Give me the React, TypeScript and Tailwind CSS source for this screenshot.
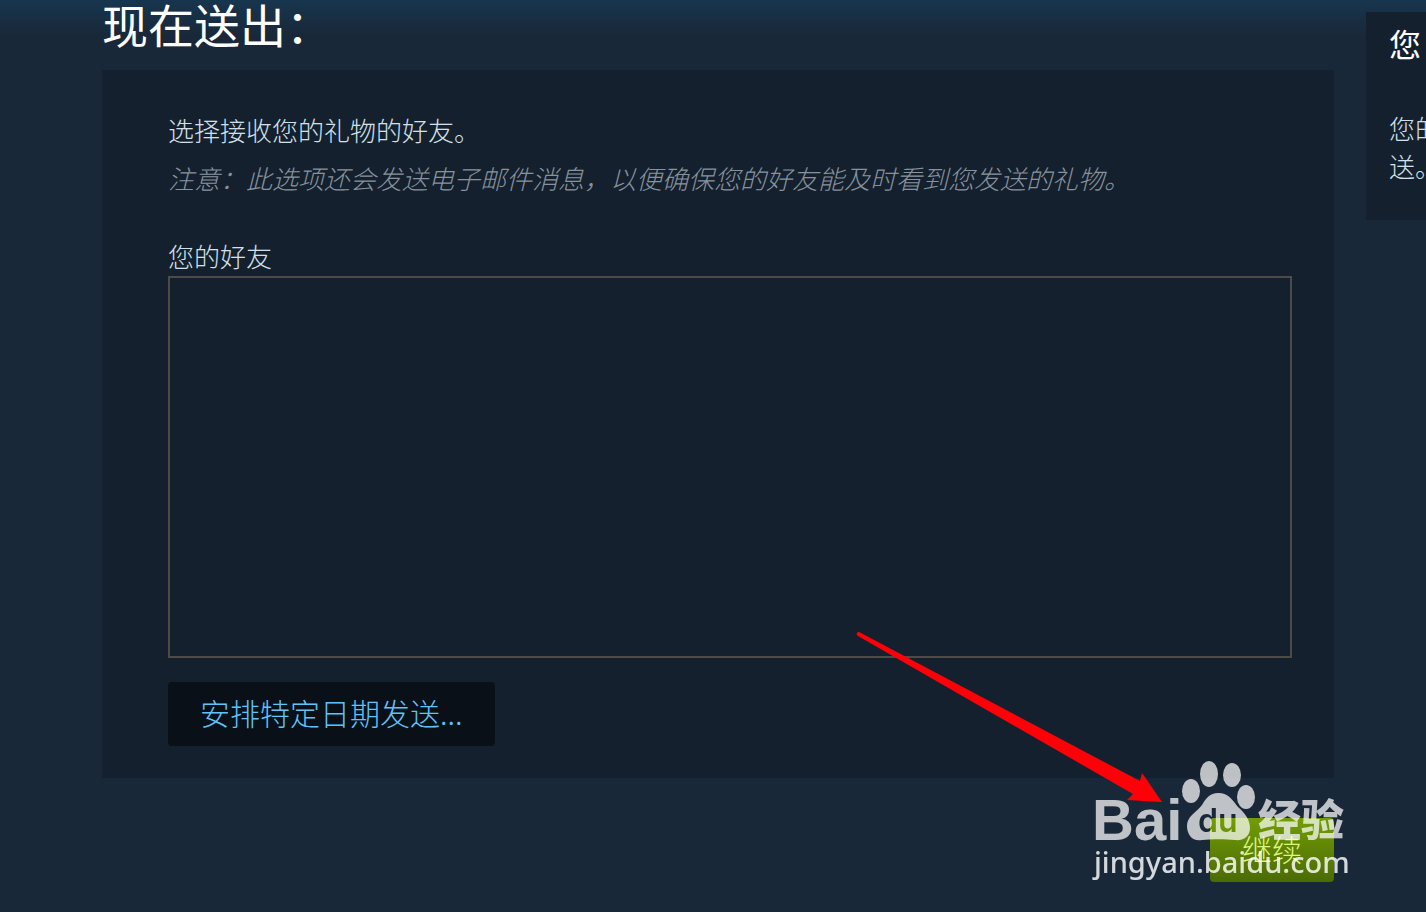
import { FC, ReactNode } from 'react';

interface PanelProps {
  children: ReactNode;
}

const GiftPanel: FC<PanelProps> = ({ children }) => {
  return (
    <section className="bg-[#14202d] pt-[39px] pb-8 pl-[66px] pr-[42px]">
      {children}
    </section>
  );
};

const Sidebar = () => {
  return (
    <aside className="mt-3 h-52 w-[60px] shrink-0 overflow-hidden whitespace-nowrap bg-[#14202d] pl-[23px] pt-[11px]">
      <h2 className="text-[32px] leading-10 text-white">您</h2>
      <p className="mt-[46px] text-[26px] font-light leading-[38px] text-[#d3e0ea]">
        您的
        <br />
        送。
      </p>
    </aside>
  );
};

const Arrow = () => {
  return (
    <svg
      className="pointer-events-none absolute right-[170px] bottom-[76px] h-[176px] w-[308px]"
      viewBox="0 0 308 176"
      aria-hidden="true"
    >
      <path
        d="M1 3Q2 1 5 3L284 151L286 143L306 172L271 170L277 164L2 6Q0 5 1 3Z"
        fill="#ff0008"
      />
    </svg>
  );
};

const Watermark = () => {
  return (
    <svg
      className="pointer-events-none absolute -right-5 -bottom-1 h-[130px] w-[264px]"
      viewBox="0 0 264 130"
      aria-hidden="true"
    >
      <mask id="paw-cut">
        <rect width="264" height="130" fill="#fff" />
        <text
          x="108"
          y="76"
          fontSize="32"
          fontWeight="600"
          className="font-[Inter,sans-serif]"
          fill="#000"
        >
          du
        </text>
      </mask>
      <g fill="#fff" opacity="0.72">
        <text
          x="2"
          y="84"
          fontSize="58"
          fontWeight="700"
          className="font-['Liberation_Sans',sans-serif]"
        >
          Bai
        </text>
        <ellipse cx="101" cy="35" rx="9" ry="12" />
        <ellipse cx="119" cy="18" rx="9" ry="13" />
        <ellipse cx="142" cy="19" rx="9" ry="12" />
        <ellipse cx="156" cy="41" rx="9" ry="12" />
        <path
          d="M128 37C139 37 143 45 148 51C155 57 160 64 160 72C160 80 154 85 145 84C136 83 121 83 112 84C103 86 97 79 97 70C97 60 106 57 112 49C116 42 120 37 128 37Z"
          mask="url(#paw-cut)"
        />
        <text
          x="168"
          y="80"
          fontSize="43"
          fontWeight="900"
          className="font-['Noto_Sans_CJK_SC',sans-serif]"
        >
          经验
        </text>
      </g>
      <text
        x="4"
        y="117"
        fontSize="29"
        fontWeight="500"
        fill="#fff"
        opacity="0.82"
        className="font-['Noto_Sans',sans-serif]"
      >
        jingyan.baidu.com
      </text>
    </svg>
  );
};

const App = () => {
  return (
    <div className="flex min-h-screen items-start gap-8 overflow-hidden bg-[#192838] bg-[linear-gradient(to_bottom,#17354f,#192838_36px)] pl-[102px] font-['Noto_Sans_CJK_SC',sans-serif]">
      <main className="min-w-0 flex-1">
        <h1 className="mb-6 text-[46px] leading-[46px] text-white">
          现在送出：
        </h1>

        <GiftPanel>
          <p className="text-[26px] font-light leading-[42px] text-[#d3e0ea]">
            选择接收您的礼物的好友。
          </p>
          <p className="mt-1.5 text-[26px] font-light italic leading-[42px] text-[#87929d]">
            注意：此选项还会发送电子邮件消息，以便确保您的好友能及时看到您发送的礼物。
          </p>
          <h2
            id="friends-label"
            className="mt-[38px] mb-px text-[26px] font-light leading-[38px] text-[#d3e0ea]"
          >
            您的好友
          </h2>
          <div
            role="listbox"
            aria-labelledby="friends-label"
            className="h-[382px] border-2 border-[#4d4b48]"
          />
          <button
            type="button"
            className="mt-6 h-16 rounded bg-[#0a1017] px-8 pb-1 text-3xl font-light text-[#5fc3fa]"
          >
            安排特定日期发送...
          </button>
        </GiftPanel>

        <div className="relative mt-10 flex justify-end">
          <button
            type="button"
            className="h-16 rounded bg-linear-to-b from-[#739d05] to-[#4b6b04] px-8 pb-1 text-3xl font-light text-[#dcf580]"
          >
            继续
          </button>
          <Watermark />
          <Arrow />
        </div>
      </main>
      <Sidebar />
    </div>
  );
};

export default App;
